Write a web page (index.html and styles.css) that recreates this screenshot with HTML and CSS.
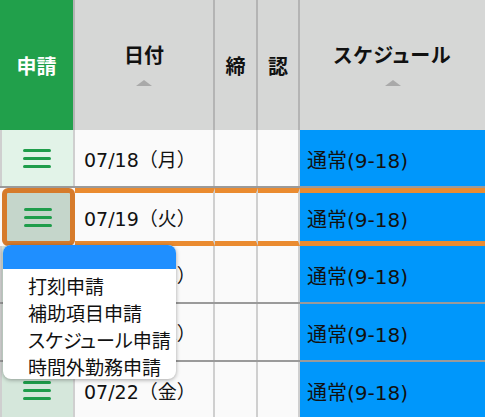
FILE: index.html
```html
<!DOCTYPE html>
<html lang="ja">
<head>
    <meta charset="UTF-8">
    <meta name="viewport" content="width=device-width, initial-scale=1.0">
    <title>勤務表</title>
    <link rel="stylesheet" href="styles.css">
</head>

<body>

    <div class="sheet">
        <div class="row head">
            <div class="cell apply">申請</div>
            <div class="cell sort">日付<span class="tri"></span></div>
            <div class="cell narrow">締</div>
            <div class="cell narrow">認</div>
            <div class="cell sort">スケジュール<span class="tri"></span></div>
        </div>

        <div class="row">
            <div class="cell menu"><span class="burger"><i></i><i></i><i></i></span></div>
            <div class="cell date">07/18（月）</div>
            <div class="cell blank"></div>
            <div class="cell blank"></div>
            <div class="cell plan">通常(9-18)</div>
        </div>
        <div class="row sel">
            <div class="cell menu"><span class="burger"><i></i><i></i><i></i></span></div>
            <div class="cell date">07/19（火）</div>
            <div class="cell blank"></div>
            <div class="cell blank"></div>
            <div class="cell plan">通常(9-18)</div>
        </div>
        <div class="row">
            <div class="cell menu dim"><span class="burger"><i></i><i></i><i></i></span></div>
            <div class="cell date">07/20（水）</div>
            <div class="cell blank"></div>
            <div class="cell blank"></div>
            <div class="cell plan">通常(9-18)</div>
        </div>
        <div class="row">
            <div class="cell menu dim"><span class="burger"><i></i><i></i><i></i></span></div>
            <div class="cell date">07/21（木）</div>
            <div class="cell blank"></div>
            <div class="cell blank"></div>
            <div class="cell plan">通常(9-18)</div>
        </div>
        <div class="row">
            <div class="cell menu dim"><span class="burger"><i></i><i></i><i></i></span></div>
            <div class="cell date">07/22（金）</div>
            <div class="cell blank"></div>
            <div class="cell blank"></div>
            <div class="cell plan">通常(9-18)</div>
        </div>

        <!-- dropdown opened from the 07/19 row -->
        <div class="popup">
            <div class="popup-top"></div>
            <ul class="popup-list">
                <li>打刻申請</li>
                <li>補助項目申請</li>
                <li>スケジュール申請</li>
                <li>時間外勤務申請</li>
            </ul>
        </div>
    </div>

</body>
</html>
```

FILE: styles.css
```css
body {
    margin: 0;
    overflow: hidden;
    font-family: "DejaVu Sans", "Noto Sans CJK JP", sans-serif;
    color: #111;
    background: #fafafa;
}

.sheet {
    position: relative;
    width: 485px;
}

.row {
    display: grid;
    grid-template-columns: 75px 140px 43px 42px 185px;
    height: 58px;
    border-bottom: 2px solid #9a9a9a;
    box-sizing: border-box;
}

.cell {
    box-sizing: border-box;
    border-right: 2px solid #cfcfcf;
    display: flex;
    align-items: center;
}

/* header */
.head {
    height: 130px;
    border-bottom: none;
    background-color: #d6d7d6;
    font-family: "Noto Sans CJK JP", sans-serif;
}

.head .cell {
    border-right-color: #b4b4b4;
    font-weight: bold;
    justify-content: center;
}

.head .apply {
    background-color: #21a04b;
    color: #fff;
    font-size: 20px;
}

.head .sort {
    flex-direction: column;
    font-size: 20px;
    padding-bottom: 4px;
}

.head .sort:last-child {
    font-feature-settings: "palt";
    letter-spacing: 1px;
}

.head .narrow {
    font-size: 20px;
}

.head .cell:last-child {
    border-right: none;
}

.tri {
    width: 0;
    height: 0;
    border-left: 8px solid transparent;
    border-right: 8px solid transparent;
    border-bottom: 6px solid #a9a9a9;
    margin-top: 11px;
}

/* body rows */
.menu {
    background-color: #e2f3e8;
    border-left: 2px solid #cfcfcf;
    justify-content: center;
}

.menu.dim {
    background-color: #d5e7db;
}

.burger {
    display: flex;
    flex-direction: column;
    gap: 5px;
    margin-left: -2px;
}

.burger i {
    display: block;
    width: 28px;
    height: 3px;
    border-radius: 2px;
    background-color: #1f9d4b;
}

.date {
    background-color: #fafafa;
    font-size: 19px;
    padding-left: 9px;
    white-space: nowrap;
}

.blank {
    background-color: #fafafa;
}

.plan {
    background-color: #0097fb;
    border-right: none;
    font-size: 20px;
    padding-left: 7px;
    padding-top: 2px;
}

/* selected row */
.sel {
    border-bottom: none;
}

.sel .cell {
    border-top: 5px solid #ea8b30;
    border-bottom: 5px solid #ea8b30;
}

.sel .menu {
    border: 5px solid #d67b2b;
    border-radius: 6px;
    background-color: #c5d6cb;
    margin-left: 2px;
}

/* dropdown */
.popup {
    position: absolute;
    left: 3px;
    top: 245px;
    width: 173px;
    height: 134px;
    background-color: #fff;
    border-radius: 8px;
    overflow: hidden;
    box-shadow: 0 1px 4px rgba(0, 0, 0, 0.35);
}

.popup-top {
    height: 24px;
    background-color: #1f8fff;
}

.popup-list {
    list-style: none;
    margin: 0;
    padding: 3px 0 0 25px;
    font-family: "Noto Sans CJK JP", sans-serif;
    font-feature-settings: "palt";
    font-size: 19px;
    line-height: 27px;
    color: #111;
    white-space: nowrap;
}
```
